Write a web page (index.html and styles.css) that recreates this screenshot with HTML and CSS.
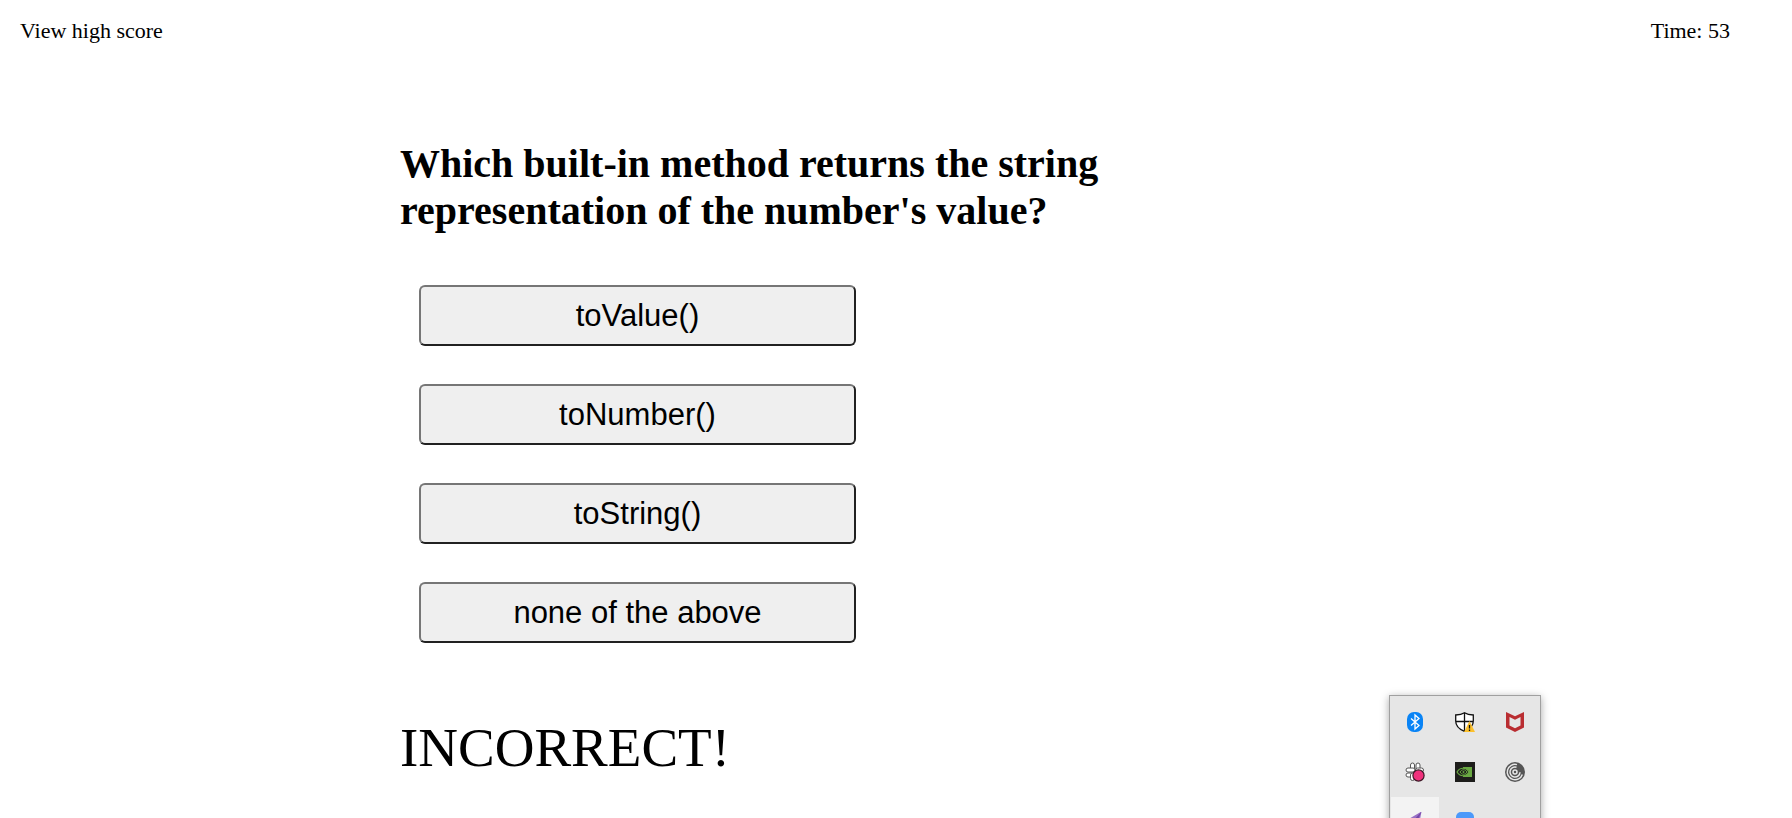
FILE: index.html
```html
<!DOCTYPE html>
<html lang="en">
<head>
<meta charset="utf-8">
<title>Code Quiz</title>
<link rel="stylesheet" href="styles.css">
</head>
<body>
<header class="topbar">
  <a class="scores-link" href="#scores">View high score</a>
  <div class="timer">Time: 53</div>
</header>
<main class="quiz">
  <h1 class="question">Which built-in method returns the string<br>representation of the number's value?</h1>
  <div class="answers">
    <button class="answer" type="button">toValue()</button>
    <button class="answer" type="button">toNumber()</button>
    <button class="answer" type="button">toString()</button>
    <button class="answer" type="button">none of the above</button>
  </div>
  <p class="result">INCORRECT!</p>
</main>
<aside class="tray" aria-label="System tray">
  <div class="cell">
    <svg class="icon" viewBox="0 0 20 20"><rect x="2" width="16" height="20" rx="7" fill="#0a84f5"/><path d="M6 6.5l8 7-4 3.500V3l4 3.500-8 7" fill="none" stroke="#fff" stroke-width="1.300"/></svg>
  </div>
  <div class="cell">
    <svg class="icon" viewBox="0 0 20 20"><path d="M9.500.8C7 2.500 4 3 .7 3v6c0 5 4 8.500 8.800 10.300C14.300 17.500 18.300 14 18.300 9V3C15 3 12 2.500 9.500.8z" fill="#fff" stroke="#111" stroke-width="1.300"/><path d="M9.500 1v18M1 9.500h17" stroke="#111" stroke-width="1.300"/><path d="M14.500 9L20 20H9z" fill="#fbc02d"/><path d="M14.500 13v3.600M14.500 17.500V19" stroke="#111" stroke-width="1.300"/></svg>
  </div>
  <div class="cell">
    <svg class="icon" viewBox="0 0 20 20"><path d="M1 0l9 4.300L19 0v15.500L10 20l-9-4.500zM4.500 5v8.500l5.500 2.700 5.500-2.700V5L10 7.700z" fill="#b92d31" fill-rule="evenodd"/></svg>
  </div>
  <div class="cell">
    <svg class="icon" viewBox="0 0 20 20"><g fill="#fff" stroke="#555" stroke-width="1"><rect x="5.500" y="1" width="4" height="8" rx="2"/><rect x="11" y="1" width="4" height="8" rx="2"/><rect x="1" y="6" width="9" height="4" rx="2"/><rect x="10.500" y="6" width="8" height="4" rx="2"/><rect x="1" y="11" width="8" height="4" rx="2"/><rect x="5.500" y="11" width="4" height="7.500" rx="2"/></g><circle cx="13.500" cy="13.500" r="5.600" fill="#f0317c" stroke="#3b1725" stroke-width="1.200"/></svg>
  </div>
  <div class="cell">
    <svg class="icon" viewBox="0 0 20 20"><path d="M0 0h20v20H0z" fill="#1d1d1b"/><path d="M8 5h9v10H8z" fill="#69a842"/><path d="M2 10c3-5 9-5 12 0-3 5-9 5-12 0z" fill="#1d1d1b" stroke="#69a842" stroke-width="1.200"/><path d="M5 10c2-3 5-3 7 0-2 3-5 3-7 0z" fill="none" stroke="#69a842"/><circle cx="8.500" cy="10" r="1" fill="#69a842"/></svg>
  </div>
  <div class="cell">
    <svg class="icon" viewBox="0 0 20 20"><circle cx="10" cy="10" r="10" fill="#555"/><g fill="none" stroke="#e6e6e6" stroke-width="1.500"><path d="M12 2.600a7.700 7.700 0 1 0 5.300 9.800"/><path d="M11.500 5.200a5 5 0 1 0 3.500 5"/><circle cx="10" cy="10" r="2"/></g></svg>
  </div>
  <div class="cell cell-active">
    <svg class="icon" viewBox="0 0 20 20"><path d="M16.500-.5L14 13 9 9 2 8z" fill="#9870c4"/><path d="M16.500-.5L12 10 9 8z" fill="#7446a8"/></svg>
  </div>
  <div class="cell">
    <svg class="icon" viewBox="0 0 20 20"><rect x="1" width="18" height="19" rx="5" fill="#4c99fa"/></svg>
  </div>
</aside>
</body>
</html>
```
FILE: styles.css
```css
* {
  box-sizing: border-box;
}

html {
  overflow: hidden;
}

body {
  margin: 0;
  background: #fff;
  color: #000;
  font-family: "Liberation Serif", "Times New Roman", serif;
}

.topbar {
  display: flex;
  justify-content: space-between;
  padding: 18px 62px 0 20px;
  font-size: 22px;
  line-height: 26px;
}

.scores-link {
  color: inherit;
  text-decoration: none;
}

.quiz {
  padding: 96px 20px 0 400px;
}

.question {
  margin: 0;
  font-size: 40px;
  line-height: 47px;
}

.answers {
  display: flex;
  flex-direction: column;
  align-items: flex-start;
  gap: 38px;
  padding: 51px 0 0 19px;
}

.answer {
  width: 437px;
  padding: 11px 8px;
  border: 2px solid;
  border-color: #767676 #212121 #212121 #767676;
  border-radius: 6px;
  background: #efefef;
  color: #000;
  font: 31px/35px "Liberation Sans", Arial, sans-serif;
}

.result {
  margin: 74px 0 0;
  font-size: 55px;
  line-height: 62px;
}

.tray {
  position: fixed;
  top: 695px;
  right: 251px;
  display: grid;
  grid-template-columns: repeat(3, 50px);
  grid-auto-rows: 50px;
  padding-top: 1px;
  border: 1px solid #a0a0a0;
  background: #e6e6e6;
  box-shadow: 0 2px 8px rgba(0, 0, 0, 0.35);
}

.cell {
  display: grid;
  place-items: center;
}

.cell-active {
  margin: 0 1px;
  background: #f3f3f3;
}

.icon {
  width: 20px;
  height: 20px;
}
```
